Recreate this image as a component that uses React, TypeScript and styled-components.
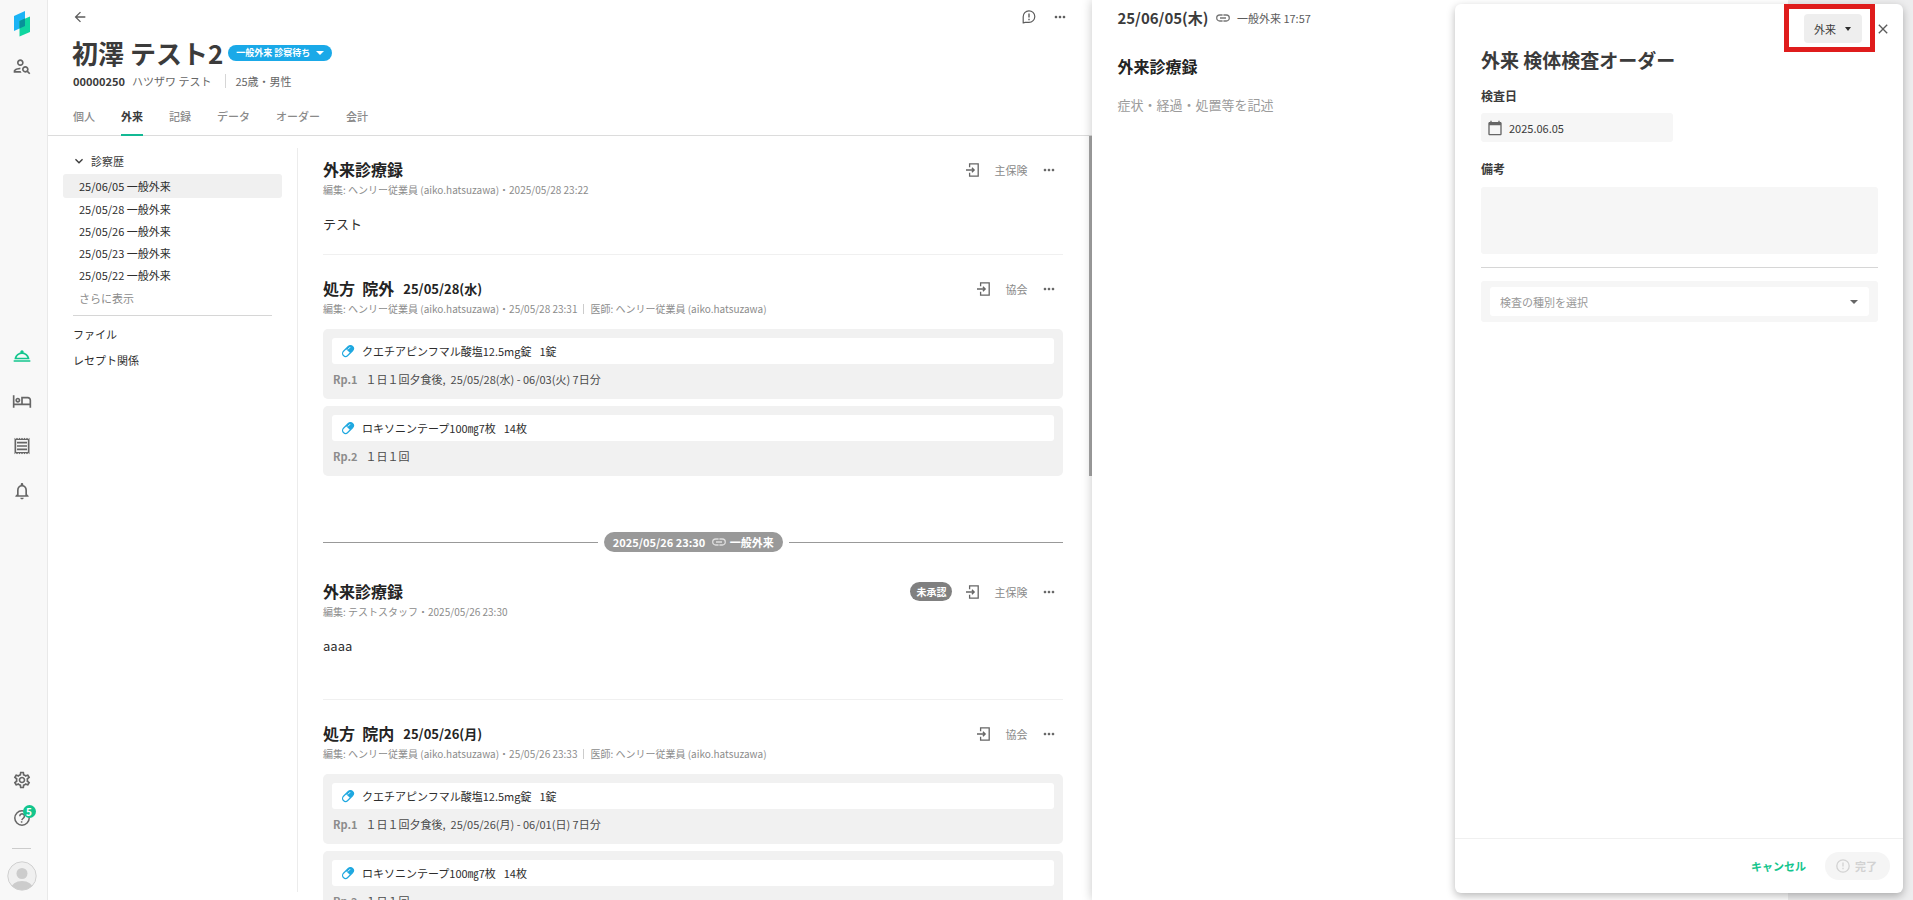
import React from 'react';
import styled, { createGlobalStyle, css } from 'styled-components';
import {
  MdArrowBack,
  MdClose,
  MdExpandMore,
  MdMoreHoriz,
  MdOutlineHotel,
  MdOutlineNotifications,
  MdOutlinePersonSearch,
  MdOutlineReceipt,
  MdOutlineRoomService,
  MdOutlineSettings,
  MdCalendarToday,
} from 'react-icons/md';

const GlobalStyle = createGlobalStyle`
  *, *::before, *::after { box-sizing: border-box; }
  body {
    margin: 0;
    background: #ffffff;
    color: #3b3b3b;
    font-family: "Noto Sans CJK JP", "Noto Sans", sans-serif;
    font-size: 11px;
    line-height: 20px;
  }
  button, input, textarea, select { font: inherit; color: inherit; }
  h1, h2, p, ul { margin: 0; padding: 0; }
  ul { list-style: none; }
`;

const BareButton = styled.button`
  display: inline-flex;
  align-items: center;
  justify-content: center;
  padding: 0;
  border: 0;
  background: none;
  cursor: pointer;
`;

const Shell = styled.div`
  display: grid;
  grid-template-columns: 48px 56fr 44fr;
  height: 100vh;
  overflow: hidden;
`;

/* ---------- Side bar ---------- */

const SideBar = styled.nav`
  display: flex;
  flex-direction: column;
  align-items: center;
  padding: 10px 4px 9px 0;
  border-right: 1px solid #e9e9e9;
  background: #f8f8f8;
  color: #666666;
`;

const SideButton = styled(BareButton)<{ $height: number; $active?: boolean }>`
  position: relative;
  flex: none;
  width: 40px;
  height: ${(p) => p.$height}px;
  color: ${(p) => (p.$active ? '#13c58d' : 'inherit')};
`;

const Logo = styled.svg`
  flex: none;
  width: 18px;
  height: 28px;
  margin-bottom: 9px;
`;

const SideGroup = styled.div`
  display: flex;
  flex-direction: column;
  margin: auto 0;
`;

const Badge = styled.span`
  position: absolute;
  top: 6px;
  right: 6px;
  width: 13px;
  height: 13px;
  border-radius: 50%;
  background: #13c58d;
  color: #ffffff;
  font-size: 10px;
  font-weight: 700;
  line-height: 13px;
  text-align: center;
`;

const SideRule = styled.hr`
  width: 19px;
  margin: 11px 0 12px;
  border: 0;
  border-top: 1px solid #cccccc;
`;

const Avatar = styled.svg`
  flex: none;
  width: 30px;
  height: 30px;
`;

/* ---------- Chart pane ---------- */

const ChartPane = styled.main`
  display: flex;
  flex-direction: column;
  min-width: 0;
  min-height: 0;
`;

const ChartHeader = styled.header`
  flex: none;
  padding: 0 24px;
  border-bottom: 1px solid #dcdcdc;
`;

const HeaderBar = styled.div`
  display: flex;
  align-items: center;
  gap: 16px;
  height: 34px;
  color: #5c5c5c;
`;

const Spacer = styled.span`
  flex: 1;
`;

const NameRow = styled.div`
  display: flex;
  align-items: center;
  gap: 5px;
  height: 37px;
`;

const PatientName = styled.h1`
  font-size: 26px;
  font-weight: 700;
  line-height: 37px;
`;

const StatusButton = styled(BareButton)`
  gap: 6px;
  height: 16px;
  padding: 0 8px;
  border-radius: 8px;
  background: #1aa9e8;
  color: #ffffff;
  font-size: 9px;
  font-weight: 700;
  line-height: 16px;
`;

const Caret = styled.span`
  flex: none;
  width: 0;
  height: 0;
  border: 3px solid transparent;
  border-top: 4px solid currentColor;
  border-bottom: 0;
`;

const WideCaret = styled(Caret)`
  border-left-width: 4px;
  border-right-width: 4px;
`;

const InfoRow = styled.div`
  display: flex;
  align-items: center;
  height: 20px;
  padding-left: 1px;
  color: #666666;
`;

const PatientId = styled.span`
  margin-right: 7px;
  color: #3b3b3b;
  font-size: 11px;
  font-weight: 700;
`;

const InfoItem = styled.span<{ $divided?: boolean }>`
  ${(p) =>
    p.$divided &&
    css`
      margin-left: 14px;
      padding-left: 9px;
      border-left: 1px solid #d6d6d6;
      line-height: 14px;
    `}
`;

const Tabs = styled.div`
  display: flex;
  gap: 26px;
  height: 44px;
  padding: 7px 0 0 1px;
`;

const Tab = styled(BareButton)<{ $active?: boolean }>`
  height: 38px;
  border-bottom: 2px solid ${(p) => (p.$active ? '#13b994' : 'transparent')};
  color: ${(p) => (p.$active ? '#3b3b3b' : '#8a8a8a')};
  font-weight: ${(p) => (p.$active ? 700 : 500)};
`;

const ChartBody = styled.div`
  position: relative;
  display: flex;
  flex: 1;
  min-height: 0;
`;

const ScrollThumb = styled.div`
  position: absolute;
  top: 0;
  right: 0;
  width: 3px;
  height: 340px;
  background: #a6a6a6;
`;

const HistoryNav = styled.nav`
  flex: none;
  width: 250px;
  margin: 12px 0 8px;
  padding: 1px 15px;
  border-right: 1px solid #ececec;
`;

const HistoryToggle = styled(BareButton)`
  gap: 4px;
  height: 24px;
  padding-left: 8px;
`;

const HistoryLink = styled.a<{ $active?: boolean; $muted?: boolean }>`
  display: block;
  padding-left: 16px;
  border-radius: 3px;
  background: ${(p) => (p.$active ? '#f0f0f0' : 'transparent')};
  color: ${(p) => (p.$muted ? '#8c8c8c' : '#2d2d2d')};
  line-height: ${(p) => (p.$active || p.$muted ? 24 : 22)}px;
  text-decoration: none;
`;

const NavRule = styled.hr`
  margin: 5px 10px;
  border: 0;
  border-top: 1px solid #d6d6d6;
`;

const NavLink = styled.a`
  display: block;
  padding-left: 10px;
  color: #2d2d2d;
  line-height: 26px;
  text-decoration: none;
`;

const Feed = styled.div`
  flex: 1;
  min-width: 0;
  padding: 0 29px 0 25px;
  overflow: hidden;
`;

const Article = styled.article<{ $ruled?: boolean }>`
  padding-top: 20px;
  ${(p) => p.$ruled && 'border-bottom: 1px solid #f0f0f0;'}
`;

const ArticleTop = styled.div`
  display: flex;
  align-items: center;
  height: 27px;
`;

const ArticleTitle = styled.h2`
  color: #242424;
  font-size: 16px;
  font-weight: 700;
  line-height: 27px;
`;

const ArticleDate = styled.span`
  margin-left: 9px;
  color: #242424;
  font-size: 13px;
  font-weight: 700;
`;

const ArticleTools = styled.div`
  display: flex;
  align-items: center;
  gap: 14px;
  margin-left: auto;
  padding-right: 6px;
  color: #666666;
`;

const Insurance = styled.span`
  color: #8a8a8a;
`;

const Pending = styled.span`
  padding: 0 6px;
  border-radius: 10px;
  background: #808080;
  color: #ffffff;
  font-size: 10px;
  font-weight: 700;
  line-height: 19px;
`;

const Meta = styled.p`
  display: flex;
  align-items: center;
  color: #8c8c8c;
  font-size: 10px;
  line-height: 14px;
`;

const MetaRule = styled.span`
  width: 1px;
  height: 10px;
  margin: 0 6px;
  background: #cccccc;
`;

const Note = styled.p<{ $tall?: boolean }>`
  padding: 17px 0 ${(p) => (p.$tall ? 43 : 20)}px;
  color: #2d2d2d;
  font-size: 13px;
  line-height: 20px;
`;

const RxList = styled.ul`
  display: grid;
  gap: 7px;
  padding-top: 13px;
`;

const RxCard = styled.li`
  padding: 9px 9px 8px;
  border-radius: 5px;
  background: #f1f1f1;
`;

const RxName = styled.div`
  display: flex;
  align-items: center;
  gap: 7px;
  height: 26px;
  padding-left: 9px;
  border-radius: 3px;
  background: #ffffff;
  color: #2d2d2d;
`;

const RxAmount = styled.span`
  margin-left: 1px;
`;

const RxUsage = styled.div`
  display: flex;
  gap: 8px;
  margin-top: 3px;
  padding-left: 1px;
  color: #4a4a4a;
  line-height: 24px;
  white-space: pre;
`;

const RxNumber = styled.span`
  color: #8c8c8c;
  font-weight: 700;
`;

const VisitDivider = styled.div`
  display: flex;
  align-items: center;
  gap: 6px;
  margin: 56px 0 6px;

  &::before,
  &::after {
    content: '';
    flex: 1;
    height: 1px;
    background: #999999;
  }
`;

const VisitPill = styled.span`
  display: flex;
  align-items: center;
  gap: 4px;
  padding: 0 9px;
  border-radius: 10px;
  background: #999999;
  color: #ffffff;
  font-weight: 700;
  line-height: 20px;
`;

/* ---------- Editor pane ---------- */

const EditorPane = styled.section`
  position: relative;
  min-width: 0;
  padding: 0 0 0 25px;
  background: linear-gradient(to left, #ededee 125px, #ffffff 125px);
  box-shadow: 0 0 10px rgba(0, 0, 0, 0.22);
`;

const VisitRow = styled.div`
  display: flex;
  align-items: center;
  gap: 4px;
  height: 35px;
  color: #5c5c5c;
`;

const VisitDate = styled.span`
  margin-right: 4px;
  color: #3b3b3b;
  font-size: 15px;
  font-weight: 700;
`;

const EditorTitle = styled.label`
  display: block;
  padding-top: 18px;
  color: #242424;
  font-size: 16px;
  font-weight: 700;
  line-height: 26px;
`;

const EditorText = styled.textarea`
  display: block;
  width: 300px;
  height: 40px;
  margin-top: 16px;
  padding: 0;
  border: 0;
  background: none;
  font-size: 13px;
  line-height: 20px;
  outline: none;
  resize: none;

  &::placeholder {
    color: #9b9b9b;
  }
`;

/* ---------- Order dialog ---------- */

const Dialog = styled.section`
  position: absolute;
  top: 4px;
  right: 10px;
  bottom: 7px;
  display: flex;
  flex-direction: column;
  width: 448px;
  border-radius: 6px;
  background: #ffffff;
  box-shadow: 0 3px 8px rgba(0, 0, 0, 0.28);
`;

const DialogTop = styled.div`
  display: flex;
  align-items: center;
  justify-content: flex-end;
  gap: 13px;
  height: 43px;
  padding: 6px 12px 0 0;
  color: #5c5c5c;
`;

const SelectBox = styled.div<{ $dark?: boolean }>`
  position: relative;
  display: flex;
  align-items: center;
  color: ${(p) => (p.$dark ? '#2d2d2d' : '#666666')};

  & > span {
    position: absolute;
    right: 11px;
    pointer-events: none;
  }
`;

const PlaceSelect = styled.select`
  appearance: none;
  width: 58px;
  height: 29px;
  padding: 0 0 0 10px;
  border: 0;
  border-radius: 4px;
  background: #eeeeee;
  color: #3b3b3b;
`;

const Highlight = styled.div`
  position: absolute;
  top: 0;
  right: 28px;
  width: 91px;
  height: 48px;
  border: 5px solid #df1c1c;
  pointer-events: none;
`;

const DialogBody = styled.div`
  flex: 1;
  padding: 0 25px 0 26px;
`;

const DialogTitle = styled.h1`
  margin-bottom: 13px;
  font-size: 19px;
  font-weight: 700;
  line-height: 26px;
`;

const FieldLabel = styled.label`
  display: block;
  font-size: 12px;
  font-weight: 700;
  line-height: 20px;
`;

const DateField = styled.div`
  display: flex;
  align-items: center;
  gap: 6px;
  width: 192px;
  height: 29px;
  margin: 7px 0 17px;
  padding-left: 6px;
  border-radius: 3px;
  background: #f6f6f6;
  color: #666666;
`;

const DateInput = styled.input`
  width: 120px;
  padding: 0;
  border: 0;
  background: none;
  color: #3b3b3b;
  outline: none;
`;

const Remarks = styled.textarea`
  display: block;
  width: 100%;
  height: 67px;
  margin-top: 8px;
  padding: 8px;
  border: 0;
  border-radius: 3px;
  background: #f6f6f6;
  resize: none;
`;

const DialogRule = styled.hr`
  margin: 13px 0;
  border: 0;
  border-top: 1px solid #d6d6d6;
`;

const TypeBox = styled.div`
  padding: 6px 9px;
  border-radius: 3px;
  background: #f6f6f6;
`;

const TypeSelect = styled.select`
  appearance: none;
  width: 100%;
  height: 29px;
  padding: 0 10px;
  border: 0;
  border-radius: 3px;
  background: #ffffff;
  color: #999999;
`;

const DialogFooter = styled.footer`
  display: flex;
  align-items: center;
  justify-content: flex-end;
  gap: 19px;
  height: 55px;
  padding-right: 13px;
  border-top: 1px solid #f0f0f0;
`;

const CancelButton = styled(BareButton)`
  color: #13c58d;
  font-weight: 700;
`;

const DoneButton = styled(BareButton)`
  gap: 5px;
  height: 28px;
  padding: 0 13px 0 11px;
  border-radius: 14px;
  background: #f5f5f5;
  color: #d2d2d2;
  font-weight: 700;
`;

/* ---------- Drawings ---------- */

const ImportIcon = () => (
  <svg width="14" height="14" viewBox="0 0 14 14" fill="none" stroke="currentColor" strokeWidth="1.3">
    <path d="M3.6 4.2V.9h8.6v12.2H3.6V9.8" />
    <path d="M0 7h8M5.9 4.7 8.2 7 5.9 9.3" />
  </svg>
);

const LinkIcon = ({ light }: { light?: boolean }) => (
  <svg
    width="14"
    height="8"
    viewBox="0 0 14 8"
    fill="none"
    stroke={light ? '#dddddd' : '#777777'}
    strokeWidth="1.3"
  >
    <path d="M6.6 1H3.7a3 3 0 0 0 0 6h2.9M7.4 1h2.9a3 3 0 0 1 0 6H7.4M4 4h6" />
  </svg>
);

const PillIcon = () => (
  <svg width="14" height="14" viewBox="0 0 14 14">
    <g transform="rotate(45 7 7)">
      <rect x="4" y=".6" width="6" height="12.8" rx="3" fill="#ffffff" stroke="#1fa8e0" strokeWidth="1.2" />
      <path d="M4 7V3.6a3 3 0 0 1 6 0V7Z" fill="#1fa8e0" />
      <path d="M5.8 3.2v2.4" stroke="#ffffff" strokeWidth=".9" strokeLinecap="round" />
    </g>
  </svg>
);

const CommentIcon = () => (
  <svg width="14" height="14" viewBox="0 0 14 14" fill="none" stroke="currentColor" strokeWidth="1.2">
    <path d="M1.2 13V6.8a5.8 5.8 0 1 1 5.8 5.6H3.2Z" strokeLinejoin="round" />
    <path d="M7 3.4v4.2M7 8.8v1.4" strokeWidth="1.4" />
  </svg>
);

const HelpIcon = () => (
  <svg width="18" height="18" viewBox="0 0 18 18" fill="none" stroke="currentColor" strokeWidth="1.5">
    <circle cx="9" cy="9" r="7.2" />
    <path d="M6.8 7.2a2.3 2.3 0 1 1 3.6 1.9c-.9.7-1.4 1-1.5 2" />
    <path d="M8.6 12.2v1.5" />
  </svg>
);

const AlertIcon = () => (
  <svg width="14" height="14" viewBox="0 0 14 14" fill="none" stroke="currentColor" strokeWidth="1.3">
    <circle cx="7" cy="7" r="6.2" />
    <path d="M7 3.6v4M7 8.8v1.5" />
  </svg>
);

/* ---------- Content ---------- */

const visits = ['25/06/05 一般外来', '25/05/28 一般外来', '25/05/26 一般外来', '25/05/23 一般外来', '25/05/22 一般外来'];

interface ToolsProps {
  insurance: string;
  pending?: boolean;
}

const Tools = ({ insurance, pending }: ToolsProps) => (
  <ArticleTools>
    {pending && <Pending>未承認</Pending>}
    <BareButton aria-label="取り込む">
      <ImportIcon />
    </BareButton>
    <Insurance>{insurance}</Insurance>
    <BareButton aria-label="その他">
      <MdMoreHoriz size={16} />
    </BareButton>
  </ArticleTools>
);

interface PrescriptionProps {
  place: string;
  date: string;
  edited: string;
  period: string;
}

const Prescription = ({ place, date, edited, period }: PrescriptionProps) => (
  <Article>
    <ArticleTop>
      <ArticleTitle>処方&nbsp; {place}</ArticleTitle>
      <ArticleDate>{date}</ArticleDate>
      <Tools insurance="協会" />
    </ArticleTop>
    <Meta>
      編集: ヘンリー従業員 (aiko.hatsuzawa)・{edited}
      <MetaRule />
      医師: ヘンリー従業員 (aiko.hatsuzawa)
    </Meta>
    <RxList>
      <RxCard>
        <RxName>
          <PillIcon />
          クエチアピンフマル酸塩12.5mg錠
          <RxAmount>1錠</RxAmount>
        </RxName>
        <RxUsage>
          <RxNumber>Rp.1</RxNumber>１日１回夕食後,&nbsp; {period} 7日分
        </RxUsage>
      </RxCard>
      <RxCard>
        <RxName>
          <PillIcon />
          ロキソニンテープ100㎎7枚
          <RxAmount>14枚</RxAmount>
        </RxName>
        <RxUsage>
          <RxNumber>Rp.2</RxNumber>１日１回
        </RxUsage>
      </RxCard>
    </RxList>
  </Article>
);

export default function App() {
  return (
    <>
      <GlobalStyle />
      <Shell>
        <SideBar aria-label="メイン">
          <Logo viewBox="0 0 18 28">
            <path d="M1 6 12 1v15L1 21Z" fill="#1bb4f5" />
            <path d="M6.5 11 17 6.500V22L6.500 26.500Z" fill="#0fd6a0" />
            <path d="M6.5 11 12 8.600V16L6.500 18.500Z" fill="#07929a" />
          </Logo>
          <SideButton $height={38} aria-label="患者検索">
            <MdOutlinePersonSearch size={20} />
          </SideButton>
          <SideGroup>
            <SideButton $height={45} $active aria-label="外来">
              <MdOutlineRoomService size={20} />
            </SideButton>
            <SideButton $height={45} aria-label="入院">
              <MdOutlineHotel size={20} />
            </SideButton>
            <SideButton $height={45} aria-label="会計">
              <MdOutlineReceipt size={20} />
            </SideButton>
            <SideButton $height={45} aria-label="通知">
              <MdOutlineNotifications size={20} />
            </SideButton>
          </SideGroup>
          <SideButton $height={38} aria-label="設定">
            <MdOutlineSettings size={20} />
          </SideButton>
          <SideButton $height={38} aria-label="ヘルプ">
            <HelpIcon />
            <Badge>5</Badge>
          </SideButton>
          <SideRule />
          <Avatar viewBox="0 0 30 30">
            <clipPath id="face">
              <circle cx="15" cy="15" r="14" />
            </clipPath>
            <circle cx="15" cy="15" r="14.2" fill="#f0f0f0" stroke="#d0d0d0" />
            <circle cx="15" cy="12.5" r="5.5" fill="#cccccc" />
            <ellipse cx="15" cy="28" rx="11" ry="8" fill="#cccccc" clipPath="url(#face)" />
          </Avatar>
        </SideBar>

        <ChartPane>
          <ChartHeader>
            <HeaderBar>
              <BareButton aria-label="戻る">
                <MdArrowBack size={16} />
              </BareButton>
              <Spacer />
              <BareButton aria-label="コメント">
                <CommentIcon />
              </BareButton>
              <BareButton aria-label="その他">
                <MdMoreHoriz size={16} />
              </BareButton>
            </HeaderBar>
            <NameRow>
              <PatientName>初澤 テスト2</PatientName>
              <StatusButton>
                一般外来 診察待ち
                <WideCaret />
              </StatusButton>
            </NameRow>
            <InfoRow>
              <PatientId>00000250</PatientId>
              <InfoItem>ハツザワ テスト</InfoItem>
              <InfoItem $divided>25歳・男性</InfoItem>
            </InfoRow>
            <Tabs>
              <Tab>個人</Tab>
              <Tab $active>外来</Tab>
              <Tab>記録</Tab>
              <Tab>データ</Tab>
              <Tab>オーダー</Tab>
              <Tab>会計</Tab>
            </Tabs>
          </ChartHeader>

          <ChartBody>
            <HistoryNav aria-label="診察歴">
              <HistoryToggle>
                <MdExpandMore size={16} />
                診察歴
              </HistoryToggle>
              {visits.map((visit, index) => (
                <HistoryLink key={visit} href="#" $active={index === 0}>
                  {visit}
                </HistoryLink>
              ))}
              <HistoryLink href="#" $muted>
                さらに表示
              </HistoryLink>
              <NavRule />
              <NavLink href="#">ファイル</NavLink>
              <NavLink href="#">レセプト関係</NavLink>
            </HistoryNav>

            <Feed>
              <Article $ruled>
                <ArticleTop>
                  <ArticleTitle>外来診療録</ArticleTitle>
                  <Tools insurance="主保険" />
                </ArticleTop>
                <Meta>編集: ヘンリー従業員 (aiko.hatsuzawa)・2025/05/28 23:22</Meta>
                <Note>テスト</Note>
              </Article>
              <Prescription
                place="院外"
                date="25/05/28(水)"
                edited="25/05/28 23:31"
                period="25/05/28(水) - 06/03(火)"
              />
              <VisitDivider>
                <VisitPill>
                  2025/05/26 23:30&nbsp;
                  <LinkIcon light />
                  一般外来
                </VisitPill>
              </VisitDivider>
              <Article $ruled>
                <ArticleTop>
                  <ArticleTitle>外来診療録</ArticleTitle>
                  <Tools insurance="主保険" pending />
                </ArticleTop>
                <Meta>編集: テストスタッフ・2025/05/26 23:30</Meta>
                <Note $tall>aaaa</Note>
              </Article>
              <Prescription
                place="院内"
                date="25/05/26(月)"
                edited="25/05/26 23:33"
                period="25/05/26(月) - 06/01(日)"
              />
            </Feed>
            <ScrollThumb />
          </ChartBody>
        </ChartPane>

        <EditorPane>
          <VisitRow>
            <VisitDate>25/06/05(木)</VisitDate>
            <LinkIcon />
            <span>&nbsp;一般外来 17:57</span>
          </VisitRow>
          <EditorTitle htmlFor="record">外来診療録</EditorTitle>
          <EditorText id="record" placeholder="症状・経過・処置等を記述" />

          <Dialog role="dialog" aria-labelledby="order-title">
            <DialogTop>
              <SelectBox $dark>
                <PlaceSelect aria-label="区分" defaultValue="外来">
                  <option>外来</option>
                </PlaceSelect>
                <Caret />
              </SelectBox>
              <BareButton aria-label="閉じる">
                <MdClose size={16} />
              </BareButton>
            </DialogTop>
            <Highlight />
            <DialogBody>
              <DialogTitle id="order-title">外来 検体検査オーダー</DialogTitle>
              <FieldLabel htmlFor="exam-date">検査日</FieldLabel>
              <DateField>
                <MdCalendarToday size={16} />
                <DateInput id="exam-date" defaultValue="2025.06.05" />
              </DateField>
              <FieldLabel htmlFor="remarks">備考</FieldLabel>
              <Remarks id="remarks" />
              <DialogRule />
              <TypeBox>
                <SelectBox>
                  <TypeSelect aria-label="検査の種別" defaultValue="">
                    <option value="">検査の種別を選択</option>
                  </TypeSelect>
                  <WideCaret />
                </SelectBox>
              </TypeBox>
            </DialogBody>
            <DialogFooter>
              <CancelButton>キャンセル</CancelButton>
              <DoneButton disabled>
                <AlertIcon />
                完了
              </DoneButton>
            </DialogFooter>
          </Dialog>
        </EditorPane>
      </Shell>
    </>
  );
}
